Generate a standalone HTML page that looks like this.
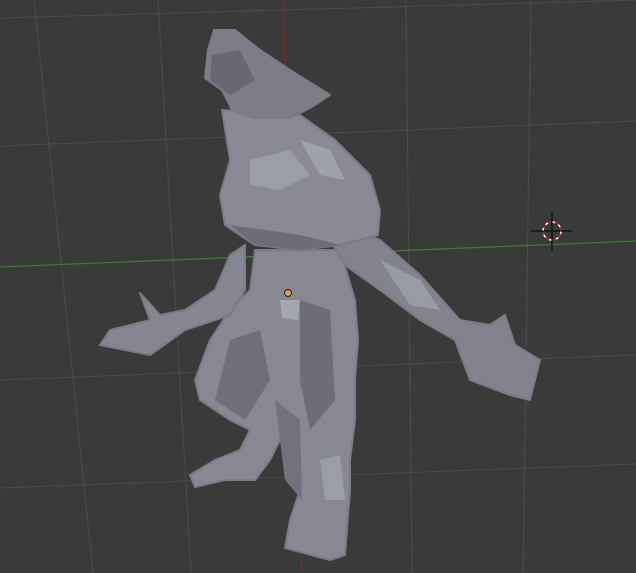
<!DOCTYPE html>
<html><head><style>
html,body{margin:0;padding:0;background:#3a3a3a;width:636px;height:573px;overflow:hidden}
svg{display:block}
</style></head><body>
<svg width="636" height="573" viewBox="0 0 636 573" xmlns="http://www.w3.org/2000/svg">
<rect width="636" height="573" fill="#3a3a3a"/>
<g stroke="#4c4c4c" stroke-width="1" fill="none">
<line x1="34" y1="0" x2="93" y2="573"/>
<line x1="158" y1="0" x2="191" y2="573"/>
<line x1="406" y1="0" x2="412" y2="573"/>
<line x1="531" y1="0" x2="523" y2="573"/>
<line x1="0" y1="18" x2="636" y2="0"/>
<line x1="0" y1="146" x2="636" y2="121"/>
<line x1="0" y1="380" x2="636" y2="355"/>
<line x1="0" y1="488" x2="636" y2="464"/>
</g>
<line x1="283" y1="0" x2="302" y2="573" stroke="#7a2a2a" stroke-width="1.3"/>
<line x1="0" y1="267" x2="636" y2="241" stroke="#3f7a32" stroke-width="1.3"/>
<g stroke="#7a7b85" stroke-width="2" stroke-linejoin="round">
<polygon fill="#878892" points="255,250,340,250,355,300,358,340,355,380,355,420,350,460,350,490,345,555,330,560,285,548,290,520,300,490,296,460,280,440,270,460,255,480,225,480,195,487,190,475,215,460,240,450,250,430,230,420,200,400,195,380,210,340,230,310,250,290"/>
<polygon fill="#82838d" points="330,240,345,225,380,240,420,275,460,320,490,325,505,315,515,345,540,360,530,400,510,395,470,380,455,340,420,320,380,290,345,265"/>
<polygon fill="#858690" points="245,245,230,255,215,290,185,310,160,315,140,293,150,320,110,330,100,345,150,355,185,330,230,315,245,290"/>
<polygon fill="#898a94" points="222,110,300,115,335,140,370,175,380,210,378,235,340,245,300,250,255,245,225,225,220,195,230,160"/>
<polygon fill="#7c7d87" points="208,50,214,30,235,30,260,50,290,70,330,95,310,108,290,118,255,118,232,110,222,90,205,78"/>
</g>
<g stroke="none">
<polygon fill="#9c9ea6" points="250,160,290,150,310,175,280,190,250,185"/>
<polygon fill="#6c6d77" points="230,225,300,235,340,245,300,250,255,245"/>
<polygon fill="#a0a2aa" points="300,140,330,150,345,180,320,175"/>
<polygon fill="#6c6d77" points="300,300,330,310,335,400,310,430,300,380"/>
<polygon fill="#a5a7af" points="280,300,300,300,298,320,282,318"/>
<polygon fill="#6e6f79" points="230,340,260,330,270,380,245,420,215,400"/>
<polygon fill="#9c9ea6" points="320,460,340,455,345,500,325,500"/>
<polygon fill="#676872" points="212,55,240,50,255,80,230,95,210,80"/>
<polygon fill="#9a9ca4" points="380,260,420,280,440,310,410,305"/>
<polygon fill="#71727c" points="275,400,300,420,302,500,285,480"/>
</g>
<circle cx="288" cy="293" r="3.5" fill="#e8a040" stroke="#222" stroke-width="1"/>
<g>
<circle cx="552" cy="231" r="9" fill="none" stroke="#fff" stroke-width="1.5" stroke-dasharray="4 3"/>
<circle cx="552" cy="231" r="9" fill="none" stroke="#c02020" stroke-width="1.5" stroke-dasharray="3 4" stroke-dashoffset="4"/>
<line x1="531" y1="231" x2="572" y2="231" stroke="#000" stroke-width="1"/>
<line x1="552" y1="212" x2="552" y2="251" stroke="#000" stroke-width="1"/>
</g>
</svg>
</body></html>
